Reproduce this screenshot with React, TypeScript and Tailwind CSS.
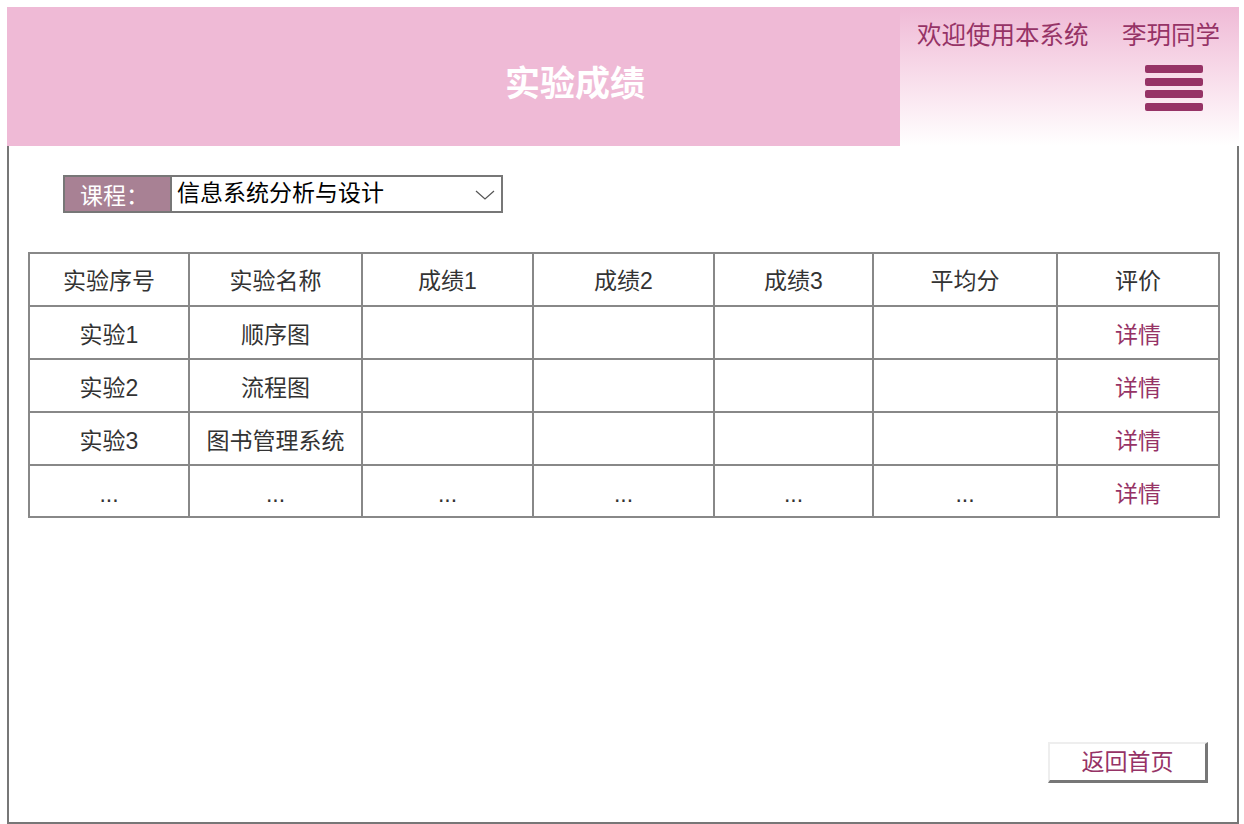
const cols = [
  { title: '实验序号', w: 'w-[160px]' },
  { title: '实验名称', w: 'w-[173px]' },
  { title: '成绩1', w: 'w-[171px]' },
  { title: '成绩2', w: 'w-[181px]' },
  { title: '成绩3', w: 'w-[159px]' },
  { title: '平均分', w: 'w-[184px]' },
  { title: '评价', w: 'w-[162px]' },
]

const rows = [
  ['实验1', '顺序图', '', '', '', ''],
  ['实验2', '流程图', '', '', '', ''],
  ['实验3', '图书管理系统', '', '', '', ''],
  ['...', '...', '...', '...', '...', '...'],
]

export default function App() {
  return (
    <div className="bg-white min-h-[824px] pt-[7px] pl-[7px] font-['Liberation_Sans','Noto_Sans_CJK_SC',sans-serif]">
      <div className="w-[1232px]">
        {/* header */}
        <div className="flex h-[139px]">
          <div className="flex-1 bg-[#efbad6] flex items-center pl-[498px] pt-[14px]">
            <h1 className="text-[35px] font-bold text-white leading-none">实验成绩</h1>
          </div>
          <div className="w-[339px] bg-gradient-to-b from-[#efbad6] to-white flex flex-col">
            <div className="flex justify-between pl-[17px] pr-[19px] pt-[13px] text-[24.5px] leading-[32px] text-[#963366]">
              <span>欢迎使用本系统</span>
              <span>李玥同学</span>
            </div>
            <button className="self-end mr-[36px] mt-[13px] flex flex-col w-[58px]">
              <span className="block h-[8px] rounded-[2px] bg-[#963366]" />
              <span className="block h-[8px] mt-[5px] rounded-[2px] bg-[#963366]" />
              <span className="block h-[8px] mt-[4px] rounded-[2px] bg-[#963366]" />
              <span className="block h-[8px] mt-[5px] rounded-[2px] bg-[#963366]" />
            </button>
          </div>
        </div>

        {/* body */}
        <div className="h-[678px] border-2 border-t-0 border-[#777] flex flex-col">
          <div className="ml-[54px] mt-[29px] flex h-[38px] w-[440px] border-2 border-[#777]">
            <div className="w-[107px] bg-[#a88194] border-r-2 border-[#777] text-white text-[23px] leading-[34px] pl-[15px] pt-[2px]">
              课程：
            </div>
            <div className="flex-1 flex items-center justify-between bg-white pl-[5px] pr-[6px]">
              <span className="text-[23px] leading-[30px] text-black pb-[2px]">信息系统分析与设计</span>
              <svg width="20" height="10" viewBox="0 0 20 10" className="mt-[2px]">
                <polyline points="1,1 10,9 19,1" fill="none" stroke="#555" strokeWidth="1.2" />
              </svg>
            </div>
          </div>

          <table className="ml-[19px] mt-[39px] w-[1190px] table-fixed border-collapse border-2 border-[#888] text-[23px] text-[#333]">
            <colgroup>
              {cols.map((c) => (
                <col key={c.title} className={c.w} />
              ))}
            </colgroup>
            <thead>
              <tr className="h-[53px]">
                {cols.map((c) => (
                  <th key={c.title} className="border-2 border-[#888] font-normal text-center pt-[4px]">
                    {c.title}
                  </th>
                ))}
              </tr>
            </thead>
            <tbody>
              {rows.map((r, i) => (
                <tr key={i} className={i === 3 ? 'h-[52px]' : 'h-[53px]'}>
                  {r.map((v, j) => (
                    <td key={j} className="border-2 border-[#888] text-center pt-[6px]">
                      {v}
                    </td>
                  ))}
                  <td className="border-2 border-[#888] text-center text-[#963366] pt-[6px]">详情</td>
                </tr>
              ))}
            </tbody>
          </table>

          <button className="mt-auto mb-[39px] mr-[29px] self-end w-[160px] h-[41px] bg-white border-t-2 border-l-2 border-t-[#eee] border-l-[#eee] border-r-[3px] border-b-[3px] border-r-[#777] border-b-[#777] text-[23px] leading-none text-[#963366]">
            返回首页
          </button>
        </div>
      </div>
    </div>
  )
}
